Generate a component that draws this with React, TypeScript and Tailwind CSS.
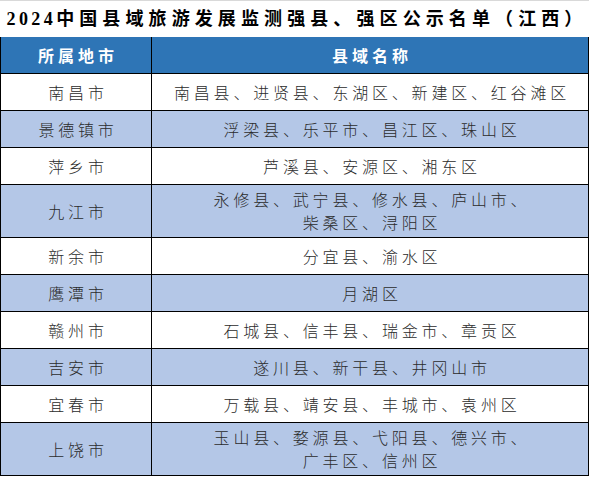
const rows: { city: string; lines: string[]; shade: boolean }[] = [
  { city: "南昌市", lines: ["南昌县、进贤县、东湖区、新建区、红谷滩区"], shade: false },
  { city: "景德镇市", lines: ["浮梁县、乐平市、昌江区、珠山区"], shade: true },
  { city: "萍乡市", lines: ["芦溪县、安源区、湘东区"], shade: false },
  { city: "九江市", lines: ["永修县、武宁县、修水县、庐山市、", "柴桑区、浔阳区"], shade: true },
  { city: "新余市", lines: ["分宜县、渝水区"], shade: false },
  { city: "鹰潭市", lines: ["月湖区"], shade: true },
  { city: "赣州市", lines: ["石城县、信丰县、瑞金市、章贡区"], shade: false },
  { city: "吉安市", lines: ["遂川县、新干县、井冈山市"], shade: true },
  { city: "宜春市", lines: ["万载县、靖安县、丰城市、袁州区"], shade: false },
  { city: "上饶市", lines: ["玉山县、婺源县、弋阳县、德兴市、", "广丰区、信州区"], shade: true },
];

const serif = "font-['Liberation_Serif','Noto_Sans_CJK_SC',serif]";
const sans = "font-['Noto_Sans_CJK_SC',sans-serif]";

export default function App() {
  return (
    <div className="w-[589px] h-[477px] bg-white overflow-hidden">
      {/* title */}
      <div className="h-[37px] flex items-center justify-center border-t border-[#d9d9d9]">
        <h1 className={`${serif} font-bold text-[18px] tracking-[5.1px] text-black leading-none pl-[5px]`}>
          <span className="tracking-[3.4px]">2024</span>中国县域旅游发展监测强县、强区公示名单（江西）
        </h1>
      </div>

      {/* table */}
      <div className="border-l border-r border-black">
        <div className="h-[37px] flex bg-[#2e75b6] border-b border-black">
          <div className="w-[151px] shrink-0 border-r border-black flex items-center justify-center">
            <span className={`${sans} font-bold text-white text-[16px] tracking-[4px] pl-[4px]`}>所属地市</span>
          </div>
          <div className="flex-1 flex items-center justify-center">
            <span className={`${sans} font-bold text-white text-[16px] tracking-[4px] pl-[4px]`}>县域名称</span>
          </div>
        </div>

        {rows.map((r) => (
          <div
            key={r.city}
            className={`flex border-b border-black ${r.lines.length > 1 ? "h-[53px]" : "h-[37px]"} ${
              r.shade ? "bg-[#b4c7e7]" : "bg-white"
            }`}
          >
            <div className="w-[151px] shrink-0 border-r border-black flex items-center justify-center">
              <span className={`${sans} font-light text-[16px] tracking-[3.8px] text-[#2b2b2b] pl-[4px]`}>{r.city}</span>
            </div>
            <div className="flex-1 flex flex-col items-center justify-center">
              {r.lines.map((l) => (
                <div
                  key={l}
                  className={`${sans} font-light text-[16px] leading-[23px] tracking-[3.8px] text-[#2b2b2b] pl-[4px]`}
                >
                  {l}
                </div>
              ))}
            </div>
          </div>
        ))}
      </div>
    </div>
  );
}
